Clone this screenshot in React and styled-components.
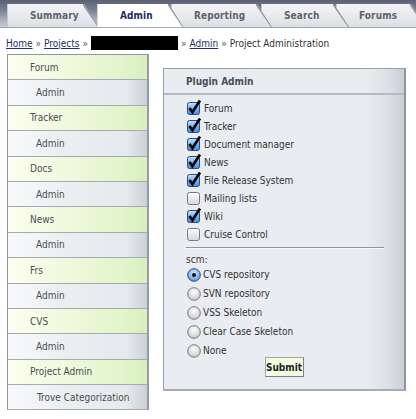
import styled, { createGlobalStyle } from 'styled-components'

const GlobalStyle = createGlobalStyle`
	body {
		margin: 0;
		background: #fff;
		font-family: "DejaVu Sans Condensed", "DejaVu Sans", sans-serif;
		font-size: 10px;
		color: #444;
	}
`

const FONT = `"DejaVu Sans Condensed", "DejaVu Sans", sans-serif`

const TABS = [
	{ label: 'Summary', width: 92, ml: 0, z: 5 },
	{ label: 'Admin', width: 87, ml: -2, z: 10, active: true },
	{ label: 'Reporting', width: 101, ml: -13, z: 4 },
	{ label: 'Search', width: 88, ml: -11, z: 3 },
	{ label: 'Forums', width: 90, ml: -13, z: 2 },
]

const NAV = [
	{ label: 'Forum' },
	{ label: 'Admin', sub: true },
	{ label: 'Tracker' },
	{ label: 'Admin', sub: true },
	{ label: 'Docs' },
	{ label: 'Admin', sub: true },
	{ label: 'News' },
	{ label: 'Admin', sub: true },
	{ label: 'Frs' },
	{ label: 'Admin', sub: true },
	{ label: 'CVS' },
	{ label: 'Admin', sub: true },
	{ label: 'Project Admin' },
	{ label: 'Trove Categorization', sub: true, deep: true },
]

const PLUGINS = [
	{ label: 'Forum', checked: true },
	{ label: 'Tracker', checked: true },
	{ label: 'Document manager', checked: true },
	{ label: 'News', checked: true },
	{ label: 'File Release System', checked: true },
	{ label: 'Mailing lists', checked: false },
	{ label: 'Wiki', checked: true },
	{ label: 'Cruise Control', checked: false },
]

const SCM = [
	{ label: 'CVS repository', selected: true },
	{ label: 'SVN repository' },
	{ label: 'VSS Skeleton' },
	{ label: 'Clear Case Skeleton' },
	{ label: 'None' },
]

const CheckIcon = ({ checked }) => (
	<svg width="14" height="14" viewBox="0 0 14 14" style={{ overflow: 'visible' }}>
		<defs>
			<linearGradient id="cbOn" x1="0" y1="0" x2="0" y2="1">
				<stop offset="0" stopColor="#c4e2ff" />
				<stop offset="0.5" stopColor="#74b1f2" />
				<stop offset="1" stopColor="#3f8ae6" />
			</linearGradient>
			<linearGradient id="cbOff" x1="0" y1="0" x2="0" y2="1">
				<stop offset="0" stopColor="#ffffff" />
				<stop offset="1" stopColor="#d6d6d6" />
			</linearGradient>
		</defs>
		<rect
			x="0.5"
			y="1.5"
			width="12"
			height="12"
			rx="2"
			fill={checked ? 'url(#cbOn)' : 'url(#cbOff)'}
			stroke={checked ? '#2d4c78' : '#7a7a7a'}
		/>
		{checked && (
			<polyline
				points="2.4,7 5.4,11.2 13,-0.5"
				fill="none"
				stroke="#000"
				strokeWidth="2.7"
				strokeLinejoin="miter"
			/>
		)}
	</svg>
)

const RadioIcon = ({ selected }) => (
	<svg width="14" height="14" viewBox="0 0 14 14">
		<defs>
			<radialGradient id="rbOff" cx="0.5" cy="0.35" r="0.7">
				<stop offset="0" stopColor="#ffffff" />
				<stop offset="1" stopColor="#c4c4c4" />
			</radialGradient>
			<radialGradient id="rbOn" cx="0.5" cy="0.35" r="0.7">
				<stop offset="0" stopColor="#d2e9ff" />
				<stop offset="1" stopColor="#4a90e6" />
			</radialGradient>
		</defs>
		<circle
			cx="7"
			cy="7"
			r="6.3"
			fill={selected ? 'url(#rbOn)' : 'url(#rbOff)'}
			stroke={selected ? '#2d4c78' : '#7a7a7a'}
		/>
		{selected && <circle cx="7" cy="7" r="2" fill="#111" />}
	</svg>
)

const App = () => (
	<>
		<GlobalStyle />
		<TabBar>
			{TABS.map(({ label, width, ml, z, active }) => (
				<Tab key={label} $w={width} $ml={ml} $z={z} $active={active}>
					{label}
				</Tab>
			))}
		</TabBar>
		<Breadcrumb>
			<Crumb>Home</Crumb>
			<Sep>»</Sep>
			<Crumb>Projects</Crumb>
			<Sep>»</Sep>
			<Redacted />
			<Sep>»</Sep>
			<Crumb>Admin</Crumb>
			<Sep>»</Sep>
			<span>Project Administration</span>
		</Breadcrumb>
		<Main>
			<Sidebar>
				{NAV.map(({ label, sub, deep }, i) => (
					<NavItem key={i} $sub={sub} $deep={deep}>
						{label}
					</NavItem>
				))}
			</Sidebar>
			<Panel>
				<PanelHeader>Plugin Admin</PanelHeader>
				<PanelBody>
					<OptionList>
						{PLUGINS.map(({ label, checked }) => (
							<CheckRow key={label}>
								<CheckIcon checked={checked} />
								<span>{label}</span>
							</CheckRow>
						))}
					</OptionList>
					<Rule />
					<GroupLabel>scm:</GroupLabel>
					<OptionList>
						{SCM.map(({ label, selected }) => (
							<RadioRow key={label}>
								<RadioIcon selected={selected} />
								<span>{label}</span>
							</RadioRow>
						))}
					</OptionList>
					<Actions>
						<SubmitButton type="button">Submit</SubmitButton>
					</Actions>
				</PanelBody>
			</Panel>
		</Main>
	</>
)

export default App

const TabBar = styled.div`
	display: flex;
	align-items: flex-end;
	height: 27px;
	padding-left: 7px;
	overflow: hidden;
	background: linear-gradient(#596073, #7d8496 40%, #b2b7c3 80%, #c9ccd4);
	border-bottom: 1px solid #a2a7b1;
`

const Tab = styled.div`
	position: relative;
	z-index: ${(p) => p.$z};
	flex-shrink: 0;
	width: ${(p) => p.$w}px;
	height: ${(p) => (p.$active ? 24 : 23)}px;
	margin-left: ${(p) => p.$ml}px;
	margin-bottom: ${(p) => (p.$active ? -1 : 0)}px;
	padding: 0 0 ${(p) => (p.$active ? 1 : 0)}px 22px;
	box-sizing: border-box;
	display: flex;
	align-items: center;
	clip-path: polygon(0 0, calc(100% - 15px) 0, 100% 100%, 0 100%);
	background: ${(p) =>
		p.$active ? '#ffffff' : 'linear-gradient(#f3f4f6, #e6e8ec 60%, #dcdfe4)'};
	border-left: 1px solid ${(p) => (p.$active ? '#d7dae0' : '#c4c8cf')};
	font: bold 10px ${FONT};
	color: ${(p) => (p.$active ? '#1d2c62' : '#5f646c')};
	letter-spacing: 0.1px;

	&::after {
		content: '';
		position: absolute;
		top: 0;
		right: 0;
		width: 16px;
		height: 100%;
		background: linear-gradient(
			to top right,
			transparent calc(50% - 1.5px),
			#7c8292 50%,
			transparent calc(50% + 1.5px)
		);
	}
`

const Breadcrumb = styled.div`
	display: flex;
	align-items: center;
	gap: 3px;
	height: 14px;
	margin-top: 8px;
	padding-left: 6px;
	font: 10px ${FONT};
	color: #333;
`

const Crumb = styled.a`
	color: #22306a;
	text-decoration: underline;
	cursor: pointer;
`

const Sep = styled.span`
	color: #555;
`

const Redacted = styled.span`
	display: inline-block;
	width: 87px;
	height: 14px;
	background: #000;
`

const Main = styled.div`
	display: flex;
	align-items: flex-start;
	margin-top: 4px;
	padding-left: 7px;
`

const Sidebar = styled.div`
	width: 139px;
	border: 1px solid #8f959f;
	border-right: 2px solid #969ca6;
	border-bottom: none;
`

const NavItem = styled.div`
	display: flex;
	align-items: center;
	height: 24.4px;
	padding-left: ${(p) => (p.$deep ? 29 : p.$sub ? 28 : 22)}px;
	border-bottom: 1px solid #a4a9b2;
	font: 10px ${FONT};
	color: #4a4d52;
	background: ${(p) =>
		p.$sub
			? 'linear-gradient(to right, #f8f9fb, #eceff2 40%, #e6e9ed 85%, #ccd0d8)'
			: 'linear-gradient(to right, #fcfeef, #eef9dc 45%, #e1f4c9 85%, #d8efbf)'};
`

const Panel = styled.div`
	width: 240px;
	margin: 14px 0 0 14px;
	border: 1px solid #9aa0aa;
	border-right: 2px solid #8e949e;
	border-bottom: 2px solid #a6abb4;
	background: linear-gradient(to right, #e9ecf0, #e9ecf0 84%, #dde1e7 93%, #c9ced7);
`

const PanelHeader = styled.div`
	height: 24px;
	display: flex;
	align-items: center;
	padding-left: 22px;
	border-bottom: 2px solid #b4b9c2;
	font: bold 10px ${FONT};
	color: #4a4d55;
`

const PanelBody = styled.div`
	padding: 4px 0 12px 22px;
`

const OptionList = styled.div`
	display: flex;
	flex-direction: column;
`

const CheckRow = styled.label`
	display: flex;
	align-items: center;
	gap: 3px;
	height: 18px;
	padding-left: 1px;
	font: 10px ${FONT};
	color: #333;
`

const RadioRow = styled(CheckRow)`
	height: 19px;
	gap: 2px;
`

const Rule = styled.div`
	width: 198px;
	margin: 4px 0 5px;
	border-top: 1px solid #8f949c;
	border-bottom: 1px solid #f6f7f9;
`

const GroupLabel = styled.div`
	height: 11px;
	line-height: 11px;
	font: 10px ${FONT};
	color: #333;
`

const Actions = styled.div`
	display: flex;
	justify-content: center;
	margin: -3px 0 0 -22px;
`

const SubmitButton = styled.button`
	width: 39px;
	height: 20px;
	padding: 0;
	background: #f3fddf;
	border: 1px solid #a4a8ae;
	border-right-color: #7d8188;
	border-bottom-color: #7d8188;
	font: bold 10px ${FONT};
	color: #222;
`
